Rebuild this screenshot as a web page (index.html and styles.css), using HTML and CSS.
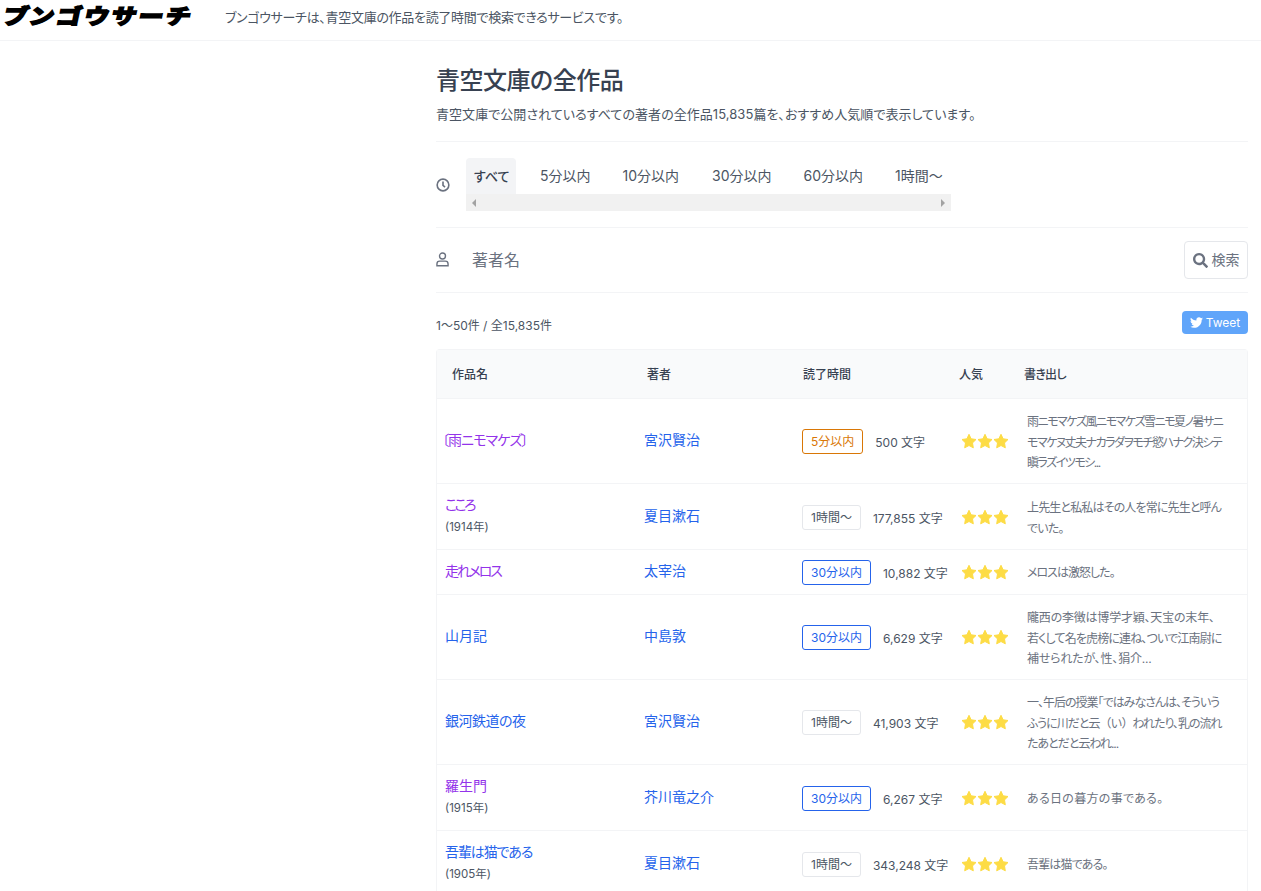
FILE: index.html
```html
<!DOCTYPE html>
<html lang="ja">
<head>
<meta charset="utf-8">
<title>ブンゴウサーチ</title>
<link rel="stylesheet" href="styles.css">
</head>
<body>
<header class="site-header">
  <a class="logo">ブンゴウサーチ</a>
  <p class="tagline">ブンゴウサーチは、青空文庫の作品を読了時間で検索できるサービスです。</p>
</header>
<main class="main">
  <section class="intro">
    <h1 class="title">青空文庫の全作品</h1>
    <p class="lead">青空文庫で公開されているすべての著者の全作品15,835篇を、おすすめ人気順で表示しています。</p>
  </section>
  <section class="filter-time">
    <svg class="icon-clock" viewBox="0 0 24 24" fill="none" stroke="#6b7280" stroke-width="2.800"><circle cx="12" cy="12" r="10"/><path d="M12 6v6.500l3.500 3"/></svg>
    <div class="tabs-wrap">
      <div class="tabs">
        <a class="tab tab-active">すべて</a>
        <a class="tab tab-5">5分以内</a>
        <a class="tab tab-10">10分以内</a>
        <a class="tab tab-30">30分以内</a>
        <a class="tab tab-60">60分以内</a>
        <a class="tab tab-1h">1時間〜</a>
      </div>
      <div class="scrollbar"><span class="arrow-left"></span><span class="arrow-right"></span></div>
    </div>
  </section>
  <section class="filter-author">
    <svg class="icon-user" viewBox="0 0 14 16" width="13" height="15" fill="none" stroke="#6b7280" stroke-width="1.500"><circle cx="7" cy="4.200" r="3.200"/><path d="M1 14.800v-2a3 3 0 0 1 3-3h6a3 3 0 0 1 3 3v2z"/></svg>
    <span class="author-input">著者名</span>
    <button class="search-btn"><svg viewBox="0 0 512 512" width="15" height="15" fill="#6b7280"><path d="M505 442.700L405.300 343c-4.500-4.500-10.600-7-17-7H372c27.600-35.300 44-79.700 44-128C416 93.100 322.900 0 208 0S0 93.100 0 208s93.100 208 208 208c48.300 0 92.700-16.400 128-44v16.300c0 6.400 2.500 12.500 7 17l99.700 99.700c9.400 9.400 24.600 9.400 33.900 0l28.300-28.300c9.400-9.400 9.400-24.600.1-34zM208 336c-70.700 0-128-57.200-128-128 0-70.700 57.200-128 128-128 70.700 0 128 57.200 128 128 0 70.700-57.200 128-128 128z"/></svg><span class="search-label">検索</span></button>
  </section>
  <section class="result-bar">
    <span class="result-count">1〜50件 / 全15,835件</span>
    <a class="tweet"><svg viewBox="0 0 24 24" width="13" height="13" fill="#fff"><path d="M23.950 4.570a10 10 0 0 1-2.820.77 4.960 4.960 0 0 0 2.160-2.720c-.95.550-2 .96-3.130 1.190a4.920 4.920 0 0 0-8.380 4.480C7.690 8.090 4.070 6.130 1.640 3.160a4.820 4.820 0 0 0-.66 2.470c0 1.710.87 3.210 2.190 4.100a4.900 4.900 0 0 1-2.230-.61v.06a4.920 4.920 0 0 0 3.950 4.830 5 5 0 0 1-2.210.08 4.940 4.940 0 0 0 4.600 3.420A9.870 9.870 0 0 1 0 19.540a14 14 0 0 0 7.560 2.210c9.050 0 14-7.500 14-13.980 0-.21 0-.42-.02-.63a9.940 9.940 0 0 0 2.460-2.550z"/></svg>Tweet</a>
  </section>
  <section class="table">
    <div class="thead">
      <span>作品名</span><span>著者</span><span>読了時間</span><span>人気</span><span class="th-excerpt">書き出し</span>
    </div>
    <div class="row row-tall">
      <div class="work"><a class="visited name-rain">〔雨ニモマケズ〕</a></div>
      <a class="author">宮沢賢治</a>
      <div class="time"><span class="badge badge-amber">5分以内</span><span class="chars">500 文字</span></div>
      <div class="stars"><svg viewBox="0 0 48 16" width="48" height="16"><use href="#star"/><use href="#star" x="16"/><use href="#star" x="32"/></svg></div>
      <p class="excerpt sp-xl">雨ニモマケズ風ニモマケズ雪ニモ夏ノ暑サニ<br>モマケヌ丈夫ナカラダヲモチ慾ハナク決シテ<br>瞋ラズイツモシ...</p>
    </div>
    <div class="row row-mid">
      <div class="work"><a class="visited name-kana">こころ</a><small class="year">(1914年)</small></div>
      <a class="author">夏目漱石</a>
      <div class="time"><span class="badge">1時間〜</span><span class="chars">177,855 文字</span></div>
      <div class="stars"><svg viewBox="0 0 48 16" width="48" height="16"><use href="#star"/><use href="#star" x="16"/><use href="#star" x="32"/></svg></div>
      <p class="excerpt sp-m">上先生と私私はその人を常に先生と呼ん<br>でいた。</p>
    </div>
    <div class="row row-short">
      <div class="work"><a class="visited name-melos">走れメロス</a></div>
      <a class="author">太宰治</a>
      <div class="time"><span class="badge badge-blue">30分以内</span><span class="chars">10,882 文字</span></div>
      <div class="stars"><svg viewBox="0 0 48 16" width="48" height="16"><use href="#star"/><use href="#star" x="16"/><use href="#star" x="32"/></svg></div>
      <p class="excerpt sp-l">メロスは激怒した。</p>
    </div>
    <div class="row row-tall">
      <div class="work"><a class="link">山月記</a></div>
      <a class="author">中島敦</a>
      <div class="time"><span class="badge badge-blue">30分以内</span><span class="chars">6,629 文字</span></div>
      <div class="stars"><svg viewBox="0 0 48 16" width="48" height="16"><use href="#star"/><use href="#star" x="16"/><use href="#star" x="32"/></svg></div>
      <p class="excerpt">隴西の李徴は博学才穎、天宝の末年、<br><span class="sp-m">若くして名を虎榜に連ね、ついで江南尉に</span><br>補せられたが、性、狷介...</p>
    </div>
    <div class="row row-tall">
      <div class="work"><a class="link name-ginga">銀河鉄道の夜</a></div>
      <a class="author">宮沢賢治</a>
      <div class="time"><span class="badge">1時間〜</span><span class="chars">41,903 文字</span></div>
      <div class="stars"><svg viewBox="0 0 48 16" width="48" height="16"><use href="#star"/><use href="#star" x="16"/><use href="#star" x="32"/></svg></div>
      <p class="excerpt sp-l">一、午后の授業「ではみなさんは、そういう<br>ふうに川だと云<span class="fullwidth">（い）</span>われたり、乳の流れ<br>たあとだと云われ...</p>
    </div>
    <div class="row row-mid">
      <div class="work"><a class="visited">羅生門</a><small class="year">(1915年)</small></div>
      <a class="author">芥川竜之介</a>
      <div class="time"><span class="badge badge-blue">30分以内</span><span class="chars">6,267 文字</span></div>
      <div class="stars"><svg viewBox="0 0 48 16" width="48" height="16"><use href="#star"/><use href="#star" x="16"/><use href="#star" x="32"/></svg></div>
      <p class="excerpt sp-wide">ある日の暮方の事である。</p>
    </div>
    <div class="row row-mid">
      <div class="work"><a class="link name-neko">吾輩は猫である</a><small class="year">(1905年)</small></div>
      <a class="author">夏目漱石</a>
      <div class="time"><span class="badge">1時間〜</span><span class="chars">343,248 文字</span></div>
      <div class="stars"><svg viewBox="0 0 48 16" width="48" height="16"><use href="#star"/><use href="#star" x="16"/><use href="#star" x="32"/></svg></div>
      <p class="excerpt sp-m">吾輩は猫である。</p>
    </div>
  </section>
</main>
<svg class="defs" width="0" height="0"><defs><path id="star" fill="#fddc45" stroke="#fddc45" stroke-width="1" stroke-linejoin="round" d="M8 1.300l2.100 4.500 4.900.7-3.500 3.400.8 4.900L8 12.500l-4.300 2.300.8-4.900L1 6.500l4.900-.7z"/></defs></svg>
</body>
</html>
```
FILE: styles.css
```css
* { box-sizing: border-box; }
html, body { margin: 0; padding: 0; }
body {
  height: 891px;
  overflow: hidden;
  background: #fff;
  color: #374151;
  font-family: Inter, "Noto Sans CJK JP", sans-serif;
  font-feature-settings: "palt";
  font-size: 14px;
}
p, h1 { margin: 0; }
a { text-decoration: none; }
.defs { position: absolute; }

.site-header {
  height: 41px;
  display: flex;
  align-items: center;
  border-bottom: 1px solid #f3f4f6;
  padding: 0 0 7px 4px;
}
.logo {
  width: 221px;
  color: #000;
  font-size: 23px;
  font-weight: 900;
  line-height: 30px;
  letter-spacing: 3px;
  -webkit-text-stroke: 1.6px #000;
  transform: skewX(-12deg) scale(1.09, 0.92);
  transform-origin: 0 50%;
}
.tagline { font-size: 13px; letter-spacing: -0.3px; color: #4b5563; }

.main { margin-left: 436px; width: 812px; }
.intro { height: 101px; padding-top: 22px; border-bottom: 1px solid #f3f4f6; }
.title { font-size: 24px; font-weight: 500; line-height: 36px; letter-spacing: -0.5px; color: #374151; }
.lead { font-size: 13px; line-height: 20px; margin-top: 5px; letter-spacing: 0.05px; color: #4b5563; }

.filter-time {
  height: 86px;
  display: flex;
  align-items: flex-start;
  border-bottom: 1px solid #f3f4f6;
  padding-top: 16px;
}
.icon-clock { margin-top: 20px; width: 14px; height: 14px; flex: none; }
.tabs-wrap { margin-left: 16px; width: 485px; }
.tabs { display: flex; height: 36px; font-size: 14px; line-height: 36px; color: #4b5563; white-space: nowrap; }
.tab { padding: 0 8px; }
.tab-active { background: #f3f4f6; border-radius: 4px 4px 0 0; font-size: 13px; font-weight: 500; color: #374151; width: 50px; }
.tab-5 { margin-left: 16px; }
.tab-10 { margin-left: 16px; }
.tab-30 { margin-left: 17px; }
.tab-60 { margin-left: 16px; }
.tab-1h { margin-left: 16px; }
.scrollbar {
  height: 17px;
  background: #f1f1f1;
  display: flex;
  align-items: center;
  justify-content: space-between;
  padding: 0 6px;
}
.arrow-left { border: 4px solid transparent; border-left: 0; border-right: 4px solid #a3a3a3; }
.arrow-right { border: 4px solid transparent; border-right: 0; border-left: 4px solid #a3a3a3; }

.filter-author {
  height: 65px;
  display: flex;
  align-items: center;
  border-bottom: 1px solid #f3f4f6;
}
.icon-user { flex: none; margin-bottom: 1px; }
.author-input { margin-left: 23px; padding-bottom: 2px; font-size: 16px; color: #6b7280; flex: 1; }
.search-btn {
  width: 64px;
  height: 38px;
  display: flex;
  align-items: center;
  justify-content: center;
  gap: 4px;
  padding: 0;
  background: #fff;
  border: 1px solid #e5e7eb;
  border-radius: 4px;
  color: #6b7280;
  font: inherit;
  font-size: 14px;
}
.search-label { padding-bottom: 3px; }

.result-bar { height: 56px; display: flex; align-items: center; justify-content: space-between; padding-top: 6px; }
.result-count { font-size: 12px; color: #4b5563; }
.tweet {
  height: 23px;
  width: 66px;
  margin-top: -4px;
  display: flex;
  align-items: center;
  justify-content: center;
  gap: 3px;
  background: #60a5fa;
  border-radius: 4px;
  color: #fff;
  font-size: 12px;
}

.table {
  border: 1px solid #f3f4f6;
  border-bottom: 0;
  border-radius: 4px 4px 0 0;
}
.thead {
  height: 49px;
  display: grid;
  grid-template-columns: 195px 156px 156px 65px 1fr;
  align-items: center;
  padding: 0 0 2px 15px;
  background: #f9fafb;
  border-bottom: 1px solid #f3f4f6;
  font-size: 12px;
  font-weight: 500;
  color: #374151;
}
.th-excerpt { letter-spacing: -0.7px; }
.row {
  display: grid;
  grid-template-columns: 199px 158px 159px 66px 1fr;
  align-items: center;
  padding-left: 8px;
  border-bottom: 1px solid #f3f4f6;
}
.row-tall { height: 85px; }
.row-mid { height: 66px; padding-top: 2px; }
.row-short { height: 45px; }
.work { display: flex; flex-direction: column; align-items: flex-start; font-size: 14px; line-height: 20px; padding-bottom: 3px; }
.row-mid .work { padding-bottom: 4px; }
.visited { color: #9333ea; }
.link { color: #2563eb; }
.name-rain { letter-spacing: -0.9px; margin-left: -3px; }
.name-kana { letter-spacing: -2.6px; }
.name-melos { letter-spacing: -2.2px; }
.name-ginga { letter-spacing: -0.5px; }
.name-neko { letter-spacing: -1.1px; }
.year { font-size: 11.500px; color: #4b5563; line-height: 20px; margin-top: 2px; }
.author { font-size: 14px; color: #2563eb; padding-bottom: 5px; }
.time { display: flex; align-items: center; }
.badge {
  display: block;
  height: 25px;
  line-height: 23px;
  padding: 0 8px;
  border: 1px solid #e5e7eb;
  border-radius: 3px;
  font-size: 12px;
  color: #4b5563;
  white-space: nowrap;
}
.badge-amber { border-color: #d97706; color: #d97706; }
.badge-blue { border-color: #2563eb; color: #2563eb; }
.chars { margin-left: 12px; font-size: 12px; color: #4b5563; white-space: nowrap; }
.stars { display: flex; align-items: center; }
.row-mid .stars { padding-bottom: 2px; }
.stars svg { display: block; }
.excerpt { font-size: 12px; line-height: 20.400px; padding-top: 2px; color: #6b7280; white-space: nowrap; letter-spacing: -0.2px; }
.row-tall .excerpt { padding-top: 4px; }
.sp-xl { letter-spacing: -1.5px; }
.sp-l { letter-spacing: -1px; }
.sp-m { letter-spacing: -0.85px; }
.sp-wide { letter-spacing: 0.3px; }
.fullwidth { font-feature-settings: normal; }
```
